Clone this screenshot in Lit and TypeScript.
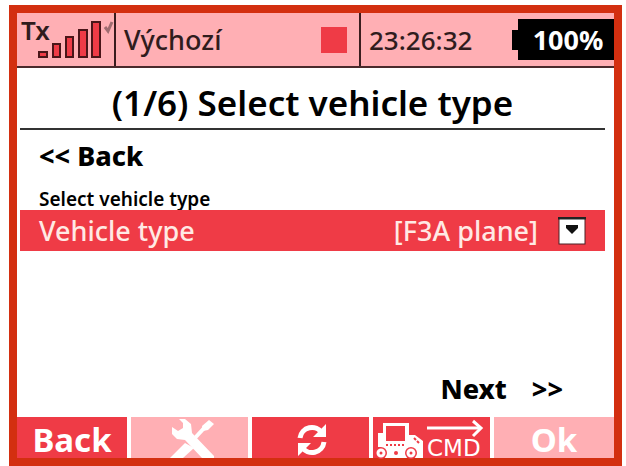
import { LitElement, html, css } from "lit";
import { customElement, property, state } from "lit/decorators.js";

@customElement("status-bar")
export class StatusBar extends LitElement {
  @property() model = "";
  @property() time = "";
  @property() battery = "";

  static styles = css`
    :host {
      display: flex;
      height: 53px;
      background: #ffafb4;
      border-bottom: 2px solid #4a2a2c;
      font-size: 27px;
      font-weight: 600;
      line-height: 36px;
      color: #301c1d;
    }
    .cell {
      display: flex;
      align-items: center;
      box-sizing: border-box;
    }
    .signal {
      width: 99px;
      flex: none;
      border-right: 2px solid #3a1c1e;
    }
    .model {
      flex: 1 1 245px;
      justify-content: space-between;
      padding: 0 12px 0 8px;
      border-right: 2px solid #3a1c1e;
      font-weight: 500;
    }
    .square {
      width: 26px;
      height: 26px;
      background: #ef3b46;
    }
    .clock {
      flex: 1 1 253px;
      justify-content: space-between;
      padding-left: 8px;
    }
    .time {
      font-size: 26px;
      font-weight: 500;
    }
    .battery {
      display: flex;
      align-items: center;
      color: #fff;
      font-weight: 700;
    }
    .nub {
      width: 6px;
      height: 20px;
      background: #000;
    }
    .charge {
      box-sizing: border-box;
      width: 96px;
      height: 41px;
      line-height: 41px;
      text-align: center;
      padding-left: 4px;
      background: #000;
    }
    .meter {
      overflow: visible;
    }
    .tx {
      font-size: 26px;
    }
  `;

  render() {
    return html`
      <div class="cell signal">
        <svg class="meter" width="97" height="53" viewBox="0 0 97 53">
          <text class="tx" x="4" y="27" fill="#301c1d">Tx</text>
          <g fill="#ef3b46" stroke="#4a1518" stroke-width="2">
            <rect x="22" y="39" width="8" height="5" />
            <rect x="36" y="31" width="7" height="13" />
            <rect x="49" y="24" width="7" height="20" />
            <rect x="62" y="17" width="8" height="27" />
            <rect x="75" y="9" width="8" height="35" />
          </g>
          <path d="M88 14l3 4l4-9" fill="none" stroke="#a06c70" stroke-width="3" />
        </svg>
      </div>
      <div class="cell model"><span>${this.model}</span><span class="square"></span></div>
      <div class="cell clock">
        <span class="time">${this.time}</span>
        <span class="battery"><span class="nub"></span><span class="charge">${this.battery}</span></span>
      </div>
    `;
  }
}

@customElement("soft-keys")
export class SoftKeys extends LitElement {
  static styles = css`
    :host {
      display: grid;
      grid-template-columns: 110fr 117fr 117fr 117fr 120fr;
      gap: 4px;
      height: 41px;
    }
    .key {
      display: flex;
      align-items: center;
      justify-content: center;
      min-width: 0;
      height: 41px;
      margin: 0;
      padding: 0;
      border: 0;
      background: #ef3b46;
      color: #fff;
      font: 700 33px/46px "Noto Sans", sans-serif;
    }
    .pale {
      background: #ffafb4;
    }
    .label {
      padding-top: 4px;
    }
    .command {
      overflow: visible;
    }
    .cmd {
      font: 400 23px "DejaVu Sans", sans-serif;
    }
  `;

  render() {
    return html`
      <button class="key"><span class="label">Back</span></button>
      <button class="key pale" aria-label="Tools">
        <svg width="48" height="41" viewBox="0 0 48 41" fill="#fff">
          <path d="M13 2L19 2L25 7L26 16L50 41H36L19 23L11 22L6 17V10L12 14L17 11V6Z" />
          <path d="M28 22L40 9" stroke="#fff" stroke-width="4" />
          <path d="M36 9L43 3L48 7L42 13L37 14Z" />
          <path d="M19 26L4 41H17L28 31Z" />
        </svg>
      </button>
      <button class="key" aria-label="Refresh">
        <svg width="36" height="41" viewBox="0 0 36 41">
          <g fill="none" stroke="#fff" stroke-width="5">
            <path d="M7 21A12 12 0 0 1 29 16" />
            <path d="M31 25A12 12 0 0 1 9 30" />
          </g>
          <path d="M33 7V20H20Z M5 39V26H18Z" fill="#fff" />
        </svg>
      </button>
      <button class="key" aria-label="Command">
        <svg class="command" width="117" height="41" viewBox="0 0 117 41">
          <path
            fill="#fff"
            fill-rule="evenodd"
            d="M10 6H36V18H42L50 24V41H5V16H10ZM13 9V24H32V9Z"
          />
          <path d="M13 28H32" stroke="#ef3b46" stroke-width="2" stroke-dasharray="2 2" />
          <path d="M41 21l2 2m1 1l2 2" stroke="#ef3b46" stroke-width="2" />
          <g fill="#ef3b46">
            <path d="M4 30H8V41H4Z" />
            <circle cx="8" cy="36" r="6" />
            <circle cx="23" cy="36" r="2" />
            <circle cx="38" cy="36" r="6" />
          </g>
          <g fill="none" stroke="#fff" stroke-width="3">
            <circle cx="8" cy="36" r="3" />
            <circle cx="38" cy="36" r="3" />
            <path d="M54 11H108" />
            <path d="M100 4L108 11L100 19" />
          </g>
          <text class="cmd" x="54" y="39" fill="#fff">CMD</text>
        </svg>
      </button>
      <button class="key pale"><span class="label">Ok</span></button>
    `;
  }
}

@customElement("app-root")
export class AppRoot extends LitElement {
  @state() private vehicle = "F3A plane";

  static styles = css`
    :host {
      display: flex;
      box-sizing: border-box;
      min-height: 100vh;
      padding: 5px 4px 0 9px;
      background: #fff;
      font-family: "Noto Sans", sans-serif;
      color: #000;
    }
    .screen {
      flex: 1;
      display: flex;
      flex-direction: column;
      border: 8px solid #d32f10;
    }
    main {
      flex: 1;
      display: flex;
      flex-direction: column;
      padding: 0 9px 0 3px;
    }
    .title {
      margin: 0;
      padding: 12px 0 2px;
      border-bottom: 2px solid #333;
      font-size: 35px;
      line-height: 46px;
      font-weight: 600;
      text-align: center;
    }
    .link {
      padding: 0;
      border: 0;
      background: none;
      color: #000;
      font: 800 27px/36px "Noto Sans", sans-serif;
    }
    .back {
      align-self: flex-start;
      margin: 8px 0 15px 19px;
    }
    .next {
      display: flex;
      gap: 25px;
      align-self: flex-end;
      margin: auto 42px 10px 0;
    }
    .hint {
      margin: 0 0 0 19px;
      font-size: 19px;
      line-height: 21px;
      font-weight: 600;
    }
    .row {
      display: flex;
      align-items: center;
      height: 41px;
      padding: 0 19px;
      background: #ef3b46;
      color: #ffe9e4;
      font-size: 27px;
      font-weight: 500;
      line-height: 36px;
    }
    .row label {
      flex: 1;
    }
    .choice {
      appearance: none;
      margin: 0 20px 0 0;
      padding: 0;
      border: 0;
      background: none;
      color: inherit;
      font: inherit;
      text-align-last: right;
    }
    .choice option {
      color: #000;
    }
  `;

  private pick(e: Event) {
    this.vehicle = (e.target as HTMLSelectElement).value;
  }

  render() {
    return html`
      <div class="screen">
        <status-bar model="Výchozí" time="23:26:32" battery="100%"></status-bar>
        <main>
          <h1 class="title">(1/6) Select vehicle type</h1>
          <button class="link back">&lt;&lt; Back</button>
          <p class="hint">Select vehicle type</p>
          <div class="row">
            <label for="vehicle">Vehicle type</label>
            <select id="vehicle" class="choice" @change=${this.pick}>
              <option value=${this.vehicle}>[${this.vehicle}]</option>
            </select>
            <svg width="28" height="28" viewBox="0 0 28 28" aria-hidden="true">
              <rect x="1" y="1" width="26" height="26" fill="#fff" stroke="#4a2226" stroke-width="1" />
              <path d="M0 1H28" stroke="#222" stroke-width="3" />
              <path d="M8 8H20V11L14 17L8 11Z" fill="#111" />
            </svg>
          </div>
          <button class="link next"><span>Next</span><span>&gt;&gt;</span></button>
        </main>
        <soft-keys></soft-keys>
      </div>
    `;
  }
}
